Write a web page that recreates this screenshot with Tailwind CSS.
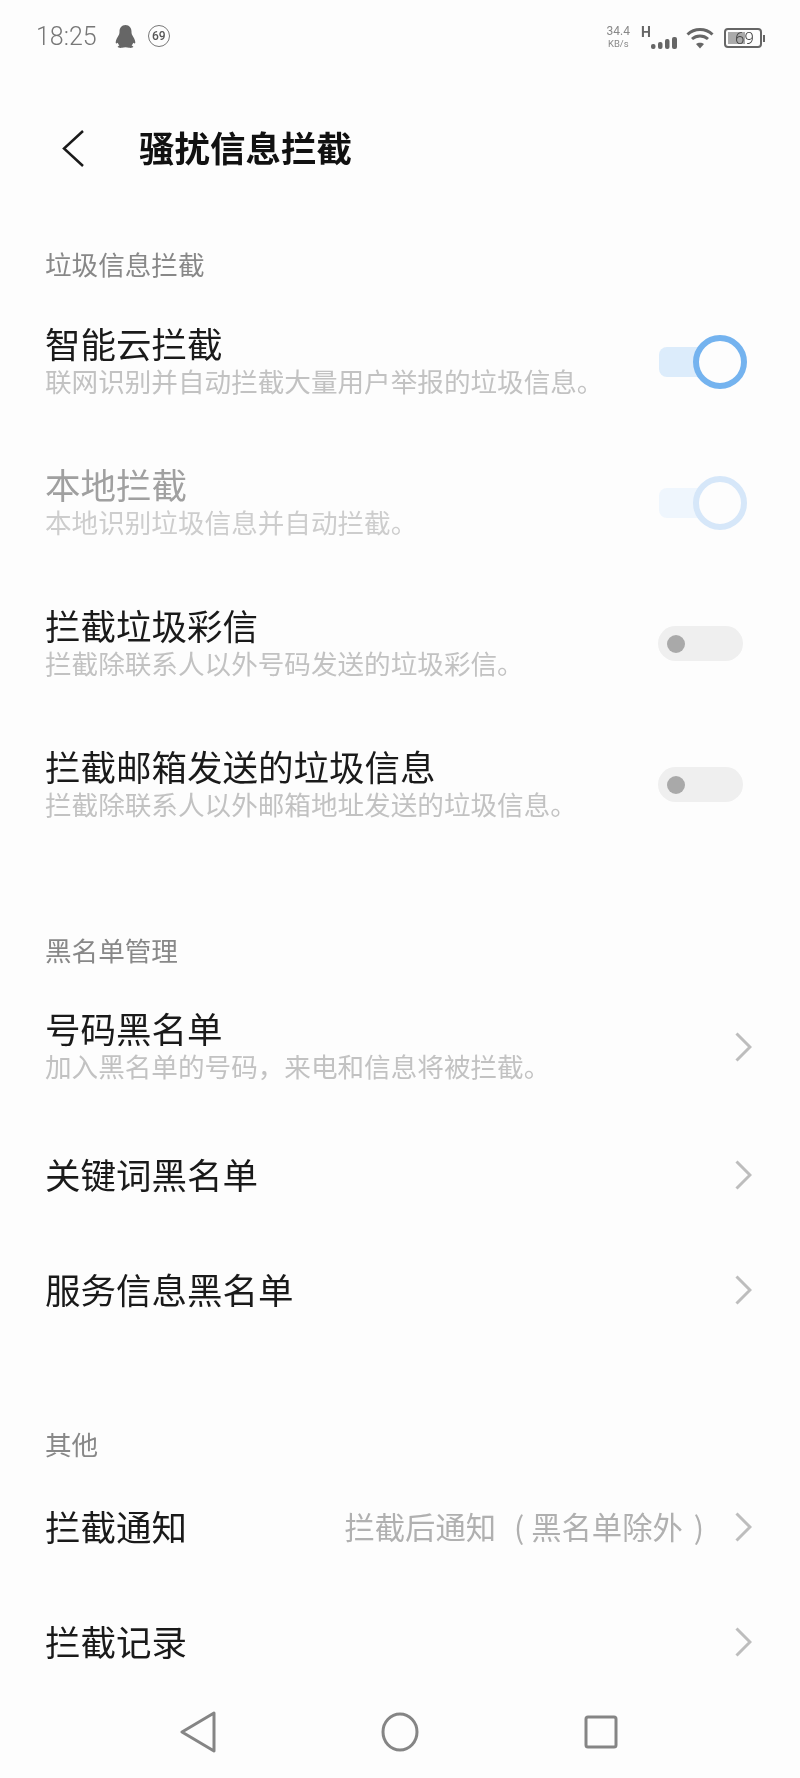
<!DOCTYPE html>
<html lang="zh-CN">
<head>
  <meta charset="UTF-8" />
  <meta name="viewport" content="width=device-width, initial-scale=1.0"/>
  <title>骚扰信息拦截</title>
  <script src="https://cdn.jsdelivr.net/npm/@tailwindcss/browser@4"></script>
</head>
<body class="bg-[#fdfdfd] font-['Noto_Sans_CJK_SC',sans-serif]">
<div class="w-[800px] h-[1778px] flex flex-col overflow-hidden blur-[0.4px]">

  <!-- status bar -->
  <div class="h-[72px] flex items-center justify-between pl-[36px] pr-[35px] text-[#777] font-['Roboto',sans-serif]">
    <div class="flex items-center">
      <span class="text-[25px] font-light leading-none">18:25</span>
      <svg class="ml-[18px]" width="21" height="23" viewBox="0 0 21 23"><path fill="#666" d="M10.5 0C6.6 0 4.5 3 4.5 6.5c0 1.3-.1 2.3-.7 3.5C2.6 12.2 .6 15 .7 17.5c.1 1.2.9 1.4 2 .3.4 1 1 1.9 1.7 2.6-1 .5-1.9 1-1.7 1.7.3.8 2.6.9 4.4.7 1-.2 2-.6 3.4-.6s2.400.4 3.400.6c1.800.2 4.100.1 4.400-.7.200-.7-.700-1.200-1.700-1.700.700-.700 1.300-1.600 1.700-2.600 1.100 1.100 1.900.900 2-.300.100-2.500-1.900-5.300-3.100-7.500-.600-1.200-.700-2.200-.700-3.500C16.500 3 14.400 0 10.500 0z"/></svg>
      <span class="ml-[12px] w-[22px] h-[22px] rounded-full border border-[#777] flex items-center justify-center text-[12px] font-medium text-[#555] leading-none">69</span>
    </div>
    <div class="flex items-center">
      <div class="flex flex-col items-center leading-none text-[#888] mt-[2px]">
        <span class="text-[12px]">34.4</span>
        <span class="text-[9.5px] mt-[2px]">KB/s</span>
      </div>
      <div class="relative ml-[11px] w-[36px] h-[24px] mt-[2px]">
        <span class="absolute left-0 top-0 text-[14px] font-bold leading-none text-[#666]">H</span>
        <svg class="absolute left-[10px] bottom-0" width="26" height="12" viewBox="0 0 26 12">
          <rect x="0" y="7" width="4.500" height="5" rx="2" fill="#666"/>
          <rect x="7" y="5" width="4.500" height="7" rx="2" fill="#666"/>
          <rect x="14" y="2" width="4.500" height="10" rx="2" fill="#666"/>
          <rect x="21" y="0" width="5" height="12" rx="2" fill="#666"/>
        </svg>
      </div>
      <svg class="ml-[9px] mt-[4px]" width="28" height="22" viewBox="0 0 28 22" fill="none" stroke="#666" stroke-width="3">
        <path d="M1.500 7.500C8.500 .8 19.500 .8 26.500 7.500"/>
        <path d="M6 12c4.500-4 11.500-4 16 0"/>
        <path d="M14 21.500l-4-4.500c2.300-1.800 5.700-1.800 8 0z" fill="#666" stroke="none"/>
      </svg>
      <div class="ml-[10px] mt-[4px] relative w-[38px] h-[20px] rounded-[4px] border-2 border-[#666] overflow-hidden flex items-center justify-center">
        <div class="absolute left-[2px] top-[2px] bottom-[2px] w-[17px] bg-[#aaa]"></div>
        <span class="relative text-[17px] leading-none text-[#444] font-light pl-[3px]">69</span>
      </div>
      <div class="ml-[1px] mt-[4px] w-[2px] h-[7px] bg-[#666]"></div>
    </div>
  </div>

  <!-- title bar -->
  <div class="h-[152px] flex items-center shrink-0">
    <svg class="ml-[62px]" width="22" height="37" viewBox="0 0 22 37" fill="none" stroke="#1a1a1a" stroke-width="2.500">
      <path d="M21 1L2 18.500 21 36"/>
    </svg>
    <h1 class="ml-[55px] -mt-[2px] text-[35.500px] leading-[44px] font-bold text-[#111]">骚扰信息拦截</h1>
  </div>

  <main class="flex-1 overflow-hidden">
    <!-- 垃圾信息拦截 -->
    <section class="pt-[20px]">
      <h2 class="h-[40px] pl-[45px] flex items-center text-[26.600px] text-[#888] mb-[7px]">垃圾信息拦截</h2>

      <div class="h-[141px] pl-[45px] pr-[53px] flex items-center justify-between">
        <div class="-mt-[2px]">
          <div class="text-[35.500px] leading-[40px] text-[#1a1a1a]">智能云拦截</div>
          <div class="text-[26.600px] leading-[36px] text-[#c2c2c2]">联网识别并自动拦截大量用户举报的垃圾信息。</div>
        </div>
        <div class="relative w-[88px] h-[54px] flex items-center">
          <div class="w-[50px] h-[30px] rounded-l-lg bg-[#dcecfb]"></div>
          <div class="absolute right-0 top-0 w-[54px] h-[54px] rounded-full border-[6px] border-[#74b3ef] bg-[#fdfdfd]"></div>
        </div>
      </div>

      <div class="h-[141px] pl-[45px] pr-[53px] flex items-center justify-between">
        <div class="-mt-[2px]">
          <div class="text-[35.500px] leading-[40px] text-[#a0a0a0]">本地拦截</div>
          <div class="text-[26.600px] leading-[36px] text-[#cdcdcd]">本地识别垃圾信息并自动拦截。</div>
        </div>
        <div class="relative w-[88px] h-[54px] flex items-center">
          <div class="w-[50px] h-[30px] rounded-l-lg bg-[#eff6fd]"></div>
          <div class="absolute right-0 top-0 w-[54px] h-[54px] rounded-full border-[6px] border-[#d6e7f9] bg-[#fdfdfd]"></div>
        </div>
      </div>

      <div class="h-[141px] pl-[45px] pr-[57px] flex items-center justify-between">
        <div class="-mt-[2px]">
          <div class="text-[35.500px] leading-[40px] text-[#1a1a1a]">拦截垃圾彩信</div>
          <div class="text-[26.600px] leading-[36px] text-[#c2c2c2]">拦截除联系人以外号码发送的垃圾彩信。</div>
        </div>
        <div class="w-[85px] h-[35px] rounded-full bg-[#efefef] flex items-center pl-[9px]">
          <div class="w-[18px] h-[18px] rounded-full bg-[#a9a9a9]"></div>
        </div>
      </div>

      <div class="h-[141px] pl-[45px] pr-[57px] flex items-center justify-between">
        <div class="-mt-[2px]">
          <div class="text-[35.500px] leading-[40px] text-[#1a1a1a]">拦截邮箱发送的垃圾信息</div>
          <div class="text-[26.600px] leading-[36px] text-[#c2c2c2]">拦截除联系人以外邮箱地址发送的垃圾信息。</div>
        </div>
        <div class="w-[85px] h-[35px] rounded-full bg-[#efefef] flex items-center pl-[9px]">
          <div class="w-[18px] h-[18px] rounded-full bg-[#a9a9a9]"></div>
        </div>
      </div>
    </section>

    <!-- 黑名单管理 -->
    <section class="pt-[75px]">
      <h2 class="h-[40px] pl-[45px] flex items-center text-[26.600px] text-[#888] mb-[6px]">黑名单管理</h2>

      <div class="h-[141px] pl-[45px] pr-[48px] flex items-center justify-between">
        <div class="-mt-[2px]">
          <div class="text-[35.500px] leading-[40px] text-[#1a1a1a]">号码黑名单</div>
          <div class="text-[26.600px] leading-[36px] text-[#c2c2c2]">加入黑名单的号码，来电和信息将被拦截。</div>
        </div>
        <svg width="17" height="30" viewBox="0 0 17 30" fill="none" stroke="#bdbdbd" stroke-width="3"><path d="M1.500 1.500L15 15 1.500 28.500"/></svg>
      </div>

      <div class="h-[115px] pl-[45px] pr-[48px] flex items-center justify-between">
        <div class="-mt-[2px] text-[35.500px] leading-[40px] text-[#1a1a1a]">关键词黑名单</div>
        <svg width="17" height="30" viewBox="0 0 17 30" fill="none" stroke="#bdbdbd" stroke-width="3"><path d="M1.500 1.500L15 15 1.500 28.500"/></svg>
      </div>

      <div class="h-[115px] pl-[45px] pr-[48px] flex items-center justify-between">
        <div class="-mt-[2px] text-[35.500px] leading-[40px] text-[#1a1a1a]">服务信息黑名单</div>
        <svg width="17" height="30" viewBox="0 0 17 30" fill="none" stroke="#bdbdbd" stroke-width="3"><path d="M1.500 1.500L15 15 1.500 28.500"/></svg>
      </div>
    </section>

    <!-- 其他 -->
    <section class="pt-[77px]">
      <h2 class="h-[40px] pl-[45px] flex items-center text-[26.600px] text-[#888] mb-[5px]">其他</h2>

      <div class="h-[115px] pl-[45px] pr-[48px] flex items-center">
        <div class="-mt-[2px] text-[35.500px] leading-[40px] text-[#1a1a1a]">拦截通知</div>
        <div class="ml-auto mr-[31px] -mt-[2px] flex text-[30.300px] leading-[40px] text-[#b0b0b0]">
          <span>拦截后通知</span><span class="ml-[18px] mr-[7px]">(</span><span>黑名单除外</span><span class="ml-[11px]">)</span>
        </div>
        <svg width="17" height="30" viewBox="0 0 17 30" fill="none" stroke="#bdbdbd" stroke-width="3"><path d="M1.500 1.500L15 15 1.500 28.500"/></svg>
      </div>

      <div class="h-[115px] pl-[45px] pr-[48px] flex items-center justify-between">
        <div class="-mt-[2px] text-[35.500px] leading-[40px] text-[#1a1a1a]">拦截记录</div>
        <svg width="17" height="30" viewBox="0 0 17 30" fill="none" stroke="#bdbdbd" stroke-width="3"><path d="M1.500 1.500L15 15 1.500 28.500"/></svg>
      </div>
    </section>
  </main>

  <!-- navigation bar -->
  <div class="h-[80px] shrink-0 pb-[13px] pl-[180px] flex items-center gap-[165px]">
    <svg width="36" height="42" viewBox="0 0 36 42" fill="none" stroke="#858585" stroke-width="3" stroke-linejoin="round"><path d="M34 2L2 21l32 19z"/></svg>
    <svg width="38" height="40" viewBox="0 0 38 40" fill="none" stroke="#858585" stroke-width="3"><ellipse cx="19" cy="20" rx="17" ry="18"/></svg>
    <svg width="34" height="34" viewBox="0 0 34 34" fill="none" stroke="#858585" stroke-width="3" stroke-linejoin="round"><rect x="2" y="2" width="30" height="30" rx="2"/></svg>
  </div>
</div>
</body>
</html>
